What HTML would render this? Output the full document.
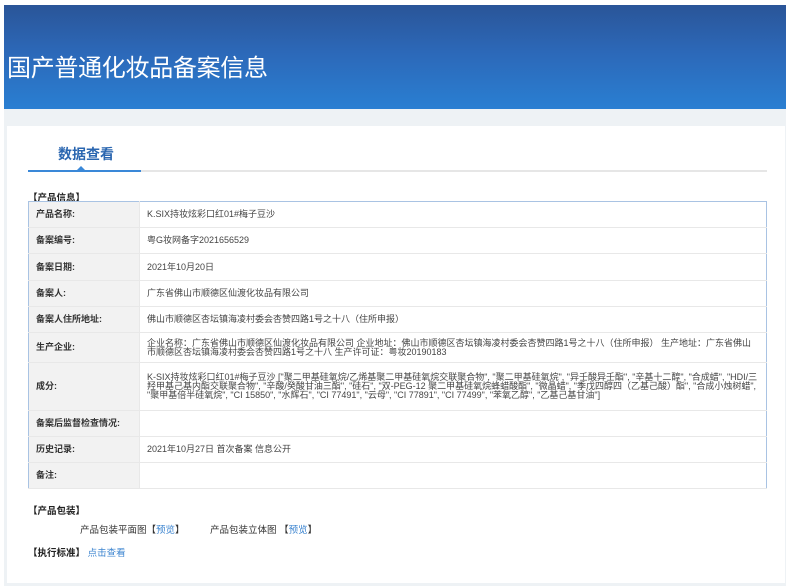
<!DOCTYPE html>
<html><head><meta charset="utf-8"><style>
*{margin:0;padding:0;box-sizing:border-box}
body{width:790px;height:586px;background:#fff;font-family:"Liberation Sans","Noto Sans CJK SC",sans-serif;position:relative;overflow:hidden;color:#333}
.hdr{position:absolute;left:4px;top:5px;width:782px;height:104px;background:linear-gradient(180deg,#2a5598 0%,#2c68b8 45%,#2a7fd2 100%);overflow:hidden}
.hdr h1{position:absolute;left:3px;top:43px;font-size:24px;font-weight:normal;color:#fff;letter-spacing:-0.3px}
.grey{position:absolute;left:4px;top:109px;width:782px;height:477px;background:#eef2f5}
.card{position:absolute;left:7px;top:126px;width:778px;height:457px;background:#fff}
.tab{position:absolute;left:58px;top:144px;font-size:14px;font-weight:bold;color:#2a66b0}
.line{position:absolute;left:28px;top:170px;width:739px;height:2px;background:#e6e6e6}
.line2{position:absolute;left:28px;top:170px;width:113px;height:2px;background:#3a88d8}
.tri{position:absolute;left:77px;top:166px;width:0;height:0;border-left:4px solid transparent;border-right:4px solid transparent;border-bottom:4px solid #3a88d8}
.sec{position:absolute;font-size:9.5px;font-weight:bold;color:#222}
table{position:absolute;left:28px;top:201px;width:739px;border-collapse:collapse;border:1px solid #a9c3e3;font-size:9px}
td{border-bottom:1px solid #e8e8e8;padding:0 7px;line-height:9px}
td.l{width:111px;background:#f2f2f2;font-weight:bold;color:#333;border-right:1px solid #e8e8e8}
td.v{color:#444}
.a{color:#3d85d0}
.t{position:absolute;font-size:9.5px;color:#333}
</style></head><body>
<div class="hdr"><h1>国产普通化妆品备案信息</h1></div>
<div class="grey"></div>
<div class="card"></div>
<div class="tab">数据查看</div>
<div class="line"></div><div class="line2"></div><div class="tri"></div>
<div class="sec" style="left:28px;top:190px">【产品信息】</div>
<table>
<tr style="height:26px"><td class="l">产品名称:</td><td class="v">K.SIX持妆炫彩口红01#梅子豆沙</td></tr>
<tr style="height:26px"><td class="l">备案编号:</td><td class="v">粤G妆网备字2021656529</td></tr>
<tr style="height:27px"><td class="l">备案日期:</td><td class="v">2021年10月20日</td></tr>
<tr style="height:26px"><td class="l">备案人:</td><td class="v">广东省佛山市顺德区仙渡化妆品有限公司</td></tr>
<tr style="height:26px"><td class="l">备案人住所地址:</td><td class="v">佛山市顺德区杏坛镇海凌村委会杏赞四路1号之十八（住所申报）</td></tr>
<tr style="height:30px"><td class="l">生产企业:</td><td class="v">企业名称：广东省佛山市顺德区仙渡化妆品有限公司 企业地址：佛山市顺德区杏坛镇海凌村委会杏赞四路1号之十八（住所申报） 生产地址：广东省佛山市顺德区杏坛镇海凌村委会杏赞四路1号之十八 生产许可证：粤妆20190183</td></tr>
<tr style="height:48px"><td class="l">成分:</td><td class="v">K-SIX持妆炫彩口红01#梅子豆沙 ["聚二甲基硅氧烷/乙烯基聚二甲基硅氧烷交联聚合物", "聚二甲基硅氧烷", "异壬酸异壬酯", "辛基十二醇", "合成蜡", "HDI/三羟甲基己基内酯交联聚合物", "辛酸/癸酸甘油三酯", "硅石", "双-PEG-12 聚二甲基硅氧烷蜂蜡酸酯", "微晶蜡", "季戊四醇四（乙基己酸）酯", "合成小烛树蜡", "聚甲基倍半硅氧烷", "CI 15850", "水辉石", "CI 77491", "云母", "CI 77891", "CI 77499", "苯氧乙醇", "乙基己基甘油"]</td></tr>
<tr style="height:26px"><td class="l">备案后监督检查情况:</td><td class="v"></td></tr>
<tr style="height:26px"><td class="l">历史记录:</td><td class="v">2021年10月27日 首次备案 信息公开</td></tr>
<tr style="height:26px"><td class="l">备注:</td><td class="v"></td></tr>
</table>
<div class="sec" style="left:28px;top:503px">【产品包装】</div>
<div class="t" style="left:80px;top:522px">产品包装平面图【<span class="a">预览</span>】</div>
<div class="t" style="left:210px;top:522px">产品包装立体图 【<span class="a">预览</span>】</div>
<div class="sec" style="left:28px;top:545px">【执行标准】 <span class="a" style="font-weight:normal">点击查看</span></div>
</body></html>
